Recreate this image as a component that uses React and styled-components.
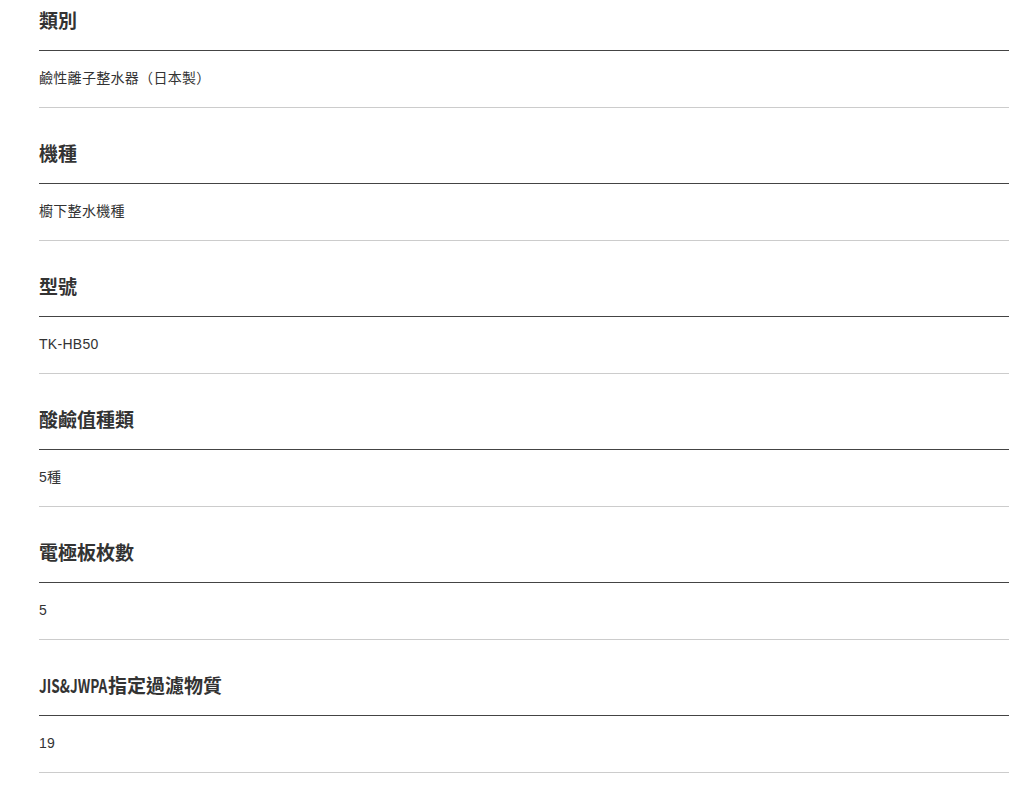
import styled, { createGlobalStyle } from "styled-components";

const GlobalStyle = createGlobalStyle`
  html, body {
    margin: 0;
    padding: 0;
    background: #fff;
  }
`;

const SpecList = styled.div`
  padding-left: 39px;
  display: flex;
  flex-direction: column;
  gap: 25px;
`;

const SpecItem = styled.div`
  display: flex;
  flex-direction: column;
`;

const SpecTitle = styled.h3`
  margin: 0;
  padding: 8px 0 18px;
  font-family: "Noto Sans CJK TC", sans-serif;
  font-weight: bold;
  font-size: 19px;
  line-height: 24px;
  color: #333;
  white-space: nowrap;
  border-bottom: 1px solid #444;
`;

/* the latin part of a title is set in a narrow face */
const Narrow = styled.span`
  display: inline-block;
  transform: scaleX(0.72);
  transform-origin: left center;
  margin-right: -26px;
`;

const SpecValue = styled.p`
  margin: 0;
  padding: 17px 0 19px;
  font-family: "Liberation Sans", "Noto Sans CJK TC", sans-serif;
  font-size: 14px;
  line-height: 20px;
  letter-spacing: 0.3px;
  color: #333;
  border-bottom: 1px solid #ccc;
`;

const specs = [
  { title: "類別", value: "鹼性離子整水器（日本製）" },
  { title: "機種", value: "櫥下整水機種" },
  { title: "型號", value: "TK-HB50" },
  { title: "酸鹼值種類", value: "5種" },
  { title: "電極板枚數", value: "5" },
  { title: "指定過濾物質", latin: "JIS&JWPA", value: "19" },
];

export default function App() {
  return (
    <>
      <GlobalStyle />
      <SpecList>
        {specs.map((s) => (
          <SpecItem key={s.title}>
            <SpecTitle>
              {s.latin && <Narrow>{s.latin}</Narrow>}
              {s.title}
            </SpecTitle>
            <SpecValue>{s.value}</SpecValue>
          </SpecItem>
        ))}
      </SpecList>
    </>
  );
}
